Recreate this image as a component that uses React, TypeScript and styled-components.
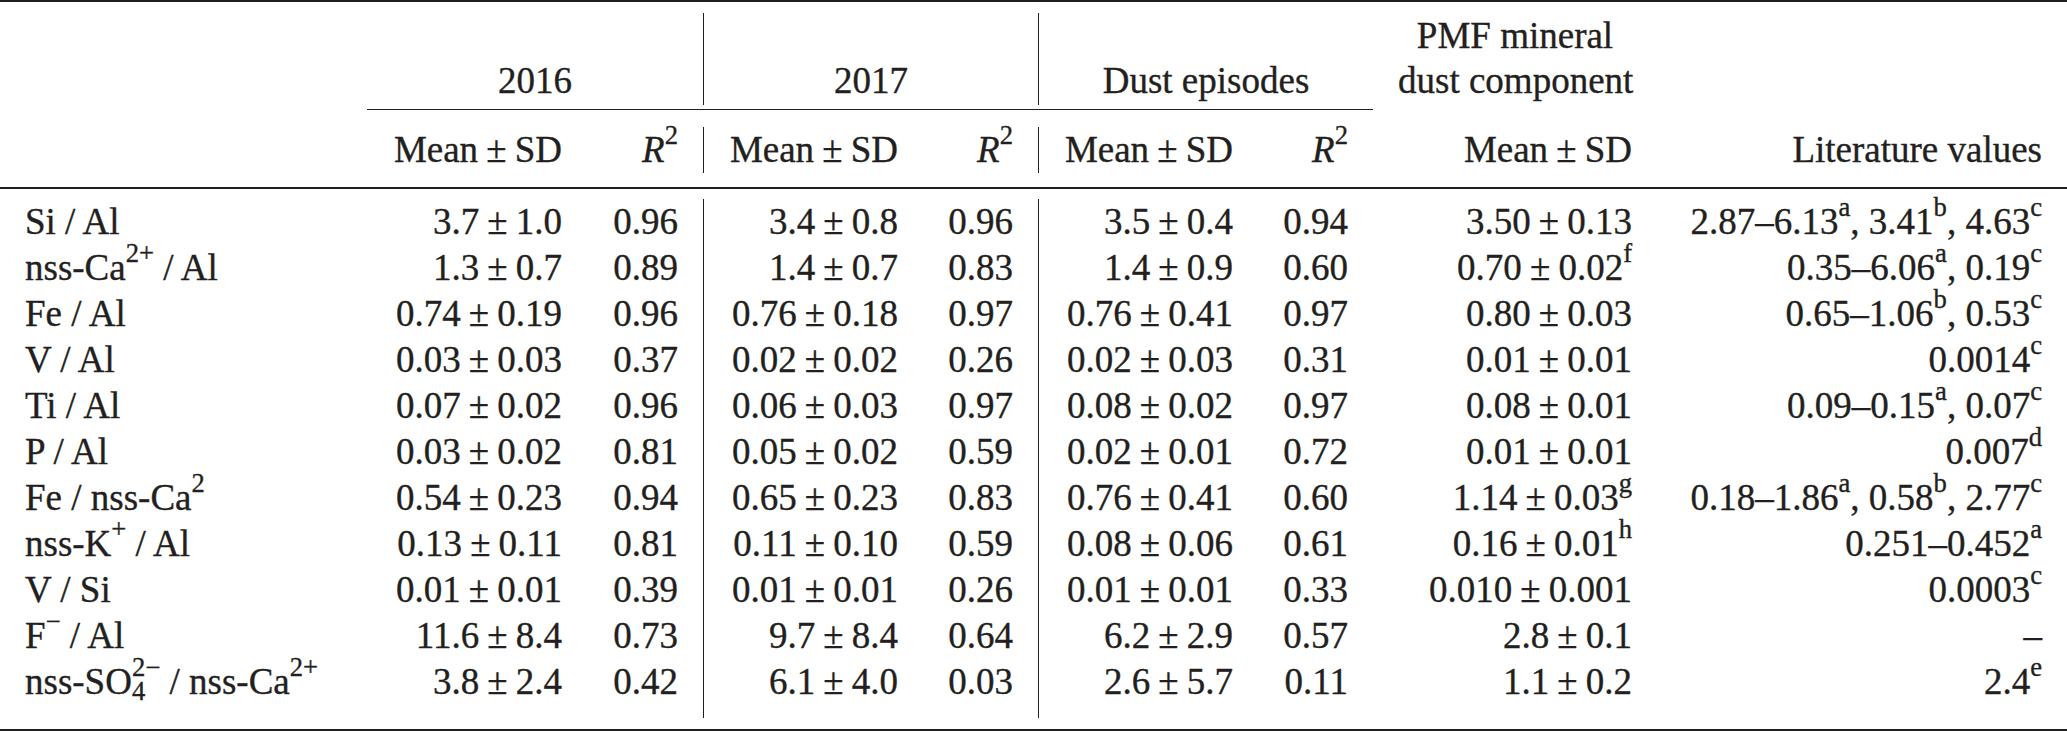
import type { ReactNode } from 'react';
import styled, { createGlobalStyle } from 'styled-components';

const ink = '#231f20';
const COLS = '367px 220px 116px 220px 115px 220px 115px 284px 410px';

const GlobalStyle = createGlobalStyle`
  html, body {
    margin: 0;
    padding: 0;
    background: #fff;
  }
  body {
    font-family: 'Liberation Serif', 'Times New Roman', serif;
    color: ${ink};
  }
`;

const Table = styled.div`
  width: 2067px;
  display: flex;
  flex-direction: column;
  font-size: 37px;
  -webkit-text-stroke: 0.35px ${ink};
`;

const HeavyRule = styled.div`
  height: 2px;
  background: ${ink};
`;

const GroupHead = styled.div`
  display: grid;
  grid-template-columns: ${COLS};
  height: 90px;
  margin-top: 11px;
`;

const HeadCell = styled.div<{ $span?: string; $divider?: boolean }>`
  grid-column: ${(p) => p.$span ?? 'auto'};
  display: flex;
  flex-direction: column;
  justify-content: flex-end;
  padding: 0 25px 2px;
  line-height: 45px;
  text-align: center;
  white-space: nowrap;
  border-left: ${(p) => (p.$divider ? `1.5px solid ${ink}` : 'none')};
`;

const CmidBand = styled.div`
  display: grid;
  grid-template-columns: ${COLS};
  height: 24px;
  padding-top: 6px;
  box-sizing: border-box;
`;

const CmidRule = styled.div`
  grid-column: 2 / 8;
  height: 1.3px;
  background: ${ink};
`;

const MidBand = styled.div`
  height: 26px;
  padding-top: 14px;
  box-sizing: border-box;
`;

const MidRule = styled.div`
  height: 2px;
  background: ${ink};
`;

const BottomBand = styled.div`
  padding-top: 11px;
`;

const Line = styled.div<{ $last?: boolean }>`
  display: grid;
  grid-template-columns: ${COLS};
  height: ${(p) => (p.$last ? 59 : 46)}px;
`;

const Cell = styled.div<{ $align?: 'left' | 'right'; $divider?: boolean }>`
  padding: 0 25px;
  line-height: 46px;
  text-align: ${(p) => p.$align ?? 'right'};
  white-space: nowrap;
  border-left: ${(p) => (p.$divider ? `1.5px solid ${ink}` : 'none')};
`;

const Pm = styled.span`
  margin: 0 0.22em;
`;

const Italic = styled.span`
  font-style: italic;
`;

const Sup = styled.span<{ $tuck?: boolean }>`
  font-size: 0.72em;
  line-height: 0;
  vertical-align: 0.68em;
  margin-left: ${(p) => (p.$tuck ? '-0.5em' : '0')};
`;

const Sub = styled.span`
  font-size: 0.72em;
  line-height: 0;
  vertical-align: -0.22em;
`;

type Pair = [string, string];
type Note = [string, string?];

interface Row {
  label: ReactNode;
  y2016: [Pair, string];
  y2017: [Pair, string];
  dust: [Pair, string];
  pmf: Pair;
  pmfNote?: string;
  lit: Note[];
}

const rows: Row[] = [
  {
    label: <>Si / Al</>,
    y2016: [['3.7', '1.0'], '0.96'],
    y2017: [['3.4', '0.8'], '0.96'],
    dust: [['3.5', '0.4'], '0.94'],
    pmf: ['3.50', '0.13'],
    lit: [['2.87–6.13', 'a'], ['3.41', 'b'], ['4.63', 'c']],
  },
  {
    label: <>nss-Ca<Sup>2+</Sup> / Al</>,
    y2016: [['1.3', '0.7'], '0.89'],
    y2017: [['1.4', '0.7'], '0.83'],
    dust: [['1.4', '0.9'], '0.60'],
    pmf: ['0.70', '0.02'],
    pmfNote: 'f',
    lit: [['0.35–6.06', 'a'], ['0.19', 'c']],
  },
  {
    label: <>Fe / Al</>,
    y2016: [['0.74', '0.19'], '0.96'],
    y2017: [['0.76', '0.18'], '0.97'],
    dust: [['0.76', '0.41'], '0.97'],
    pmf: ['0.80', '0.03'],
    lit: [['0.65–1.06', 'b'], ['0.53', 'c']],
  },
  {
    label: <>V / Al</>,
    y2016: [['0.03', '0.03'], '0.37'],
    y2017: [['0.02', '0.02'], '0.26'],
    dust: [['0.02', '0.03'], '0.31'],
    pmf: ['0.01', '0.01'],
    lit: [['0.0014', 'c']],
  },
  {
    label: <>Ti / Al</>,
    y2016: [['0.07', '0.02'], '0.96'],
    y2017: [['0.06', '0.03'], '0.97'],
    dust: [['0.08', '0.02'], '0.97'],
    pmf: ['0.08', '0.01'],
    lit: [['0.09–0.15', 'a'], ['0.07', 'c']],
  },
  {
    label: <>P / Al</>,
    y2016: [['0.03', '0.02'], '0.81'],
    y2017: [['0.05', '0.02'], '0.59'],
    dust: [['0.02', '0.01'], '0.72'],
    pmf: ['0.01', '0.01'],
    lit: [['0.007', 'd']],
  },
  {
    label: <>Fe / nss-Ca<Sup>2</Sup></>,
    y2016: [['0.54', '0.23'], '0.94'],
    y2017: [['0.65', '0.23'], '0.83'],
    dust: [['0.76', '0.41'], '0.60'],
    pmf: ['1.14', '0.03'],
    pmfNote: 'g',
    lit: [['0.18–1.86', 'a'], ['0.58', 'b'], ['2.77', 'c']],
  },
  {
    label: <>nss-K<Sup>+</Sup> / Al</>,
    y2016: [['0.13', '0.11'], '0.81'],
    y2017: [['0.11', '0.10'], '0.59'],
    dust: [['0.08', '0.06'], '0.61'],
    pmf: ['0.16', '0.01'],
    pmfNote: 'h',
    lit: [['0.251–0.452', 'a']],
  },
  {
    label: <>V / Si</>,
    y2016: [['0.01', '0.01'], '0.39'],
    y2017: [['0.01', '0.01'], '0.26'],
    dust: [['0.01', '0.01'], '0.33'],
    pmf: ['0.010', '0.001'],
    lit: [['0.0003', 'c']],
  },
  {
    label: <>F<Sup>−</Sup> / Al</>,
    y2016: [['11.6', '8.4'], '0.73'],
    y2017: [['9.7', '8.4'], '0.64'],
    dust: [['6.2', '2.9'], '0.57'],
    pmf: ['2.8', '0.1'],
    lit: [['–']],
  },
  {
    label: (
      <>
        nss-SO<Sub>4</Sub>
        <Sup $tuck>2−</Sup> / nss-Ca<Sup>2+</Sup>
      </>
    ),
    y2016: [['3.8', '2.4'], '0.42'],
    y2017: [['6.1', '4.0'], '0.03'],
    dust: [['2.6', '5.7'], '0.11'],
    pmf: ['1.1', '0.2'],
    lit: [['2.4', 'e']],
  },
];

const PlusMinus = ({ v, note }: { v: Pair; note?: string }) => (
  <>
    {v[0]}
    <Pm>±</Pm>
    {v[1]}
    {note && <Sup>{note}</Sup>}
  </>
);

const RSquared = () => (
  <>
    <Italic>R</Italic>
    <Sup>2</Sup>
  </>
);

const MeanSd = () => (
  <>
    Mean<Pm>±</Pm>SD
  </>
);

export default function App() {
  return (
    <>
      <GlobalStyle />
      <Table>
        <HeavyRule />
        <GroupHead>
          <HeadCell />
          <HeadCell $span="2 / 4">2016</HeadCell>
          <HeadCell $span="4 / 6" $divider>
            2017
          </HeadCell>
          <HeadCell $span="6 / 8" $divider>
            Dust episodes
          </HeadCell>
          <HeadCell $span="8 / 9">
            PMF mineral
            <br />
            dust component
          </HeadCell>
          <HeadCell />
        </GroupHead>
        <CmidBand>
          <CmidRule />
        </CmidBand>
        <Line>
          <Cell />
          <Cell>
            <MeanSd />
          </Cell>
          <Cell>
            <RSquared />
          </Cell>
          <Cell $divider>
            <MeanSd />
          </Cell>
          <Cell>
            <RSquared />
          </Cell>
          <Cell $divider>
            <MeanSd />
          </Cell>
          <Cell>
            <RSquared />
          </Cell>
          <Cell>
            <MeanSd />
          </Cell>
          <Cell>Literature values</Cell>
        </Line>
        <MidBand>
          <MidRule />
        </MidBand>
        {rows.map((r, i) => (
          <Line key={i} $last={i === rows.length - 1}>
            <Cell $align="left">{r.label}</Cell>
            <Cell>
              <PlusMinus v={r.y2016[0]} />
            </Cell>
            <Cell>{r.y2016[1]}</Cell>
            <Cell $divider>
              <PlusMinus v={r.y2017[0]} />
            </Cell>
            <Cell>{r.y2017[1]}</Cell>
            <Cell $divider>
              <PlusMinus v={r.dust[0]} />
            </Cell>
            <Cell>{r.dust[1]}</Cell>
            <Cell>
              <PlusMinus v={r.pmf} note={r.pmfNote} />
            </Cell>
            <Cell>
              {r.lit.map(([val, note], j) => (
                <span key={j}>
                  {j > 0 && ', '}
                  {val}
                  {note && <Sup>{note}</Sup>}
                </span>
              ))}
            </Cell>
          </Line>
        ))}
        <BottomBand>
          <HeavyRule />
        </BottomBand>
      </Table>
    </>
  );
}
